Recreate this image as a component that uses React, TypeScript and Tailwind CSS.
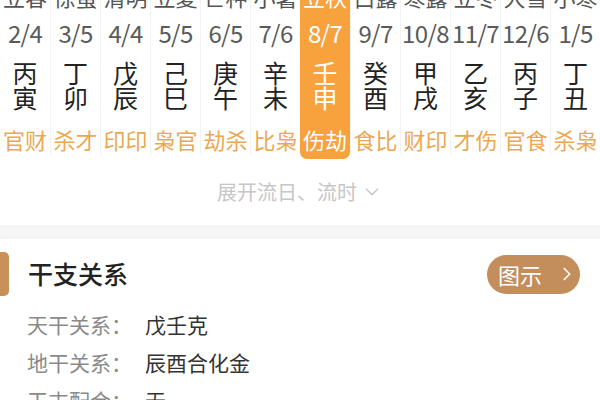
import { ChevronDown, ChevronRight } from "lucide-react";

const cols = [
  { term: "立春", date: "2/4", gan: "丙", zhi: "寅", god: "官财" },
  { term: "惊蛰", date: "3/5", gan: "丁", zhi: "卯", god: "杀才" },
  { term: "清明", date: "4/4", gan: "戊", zhi: "辰", god: "印印" },
  { term: "立夏", date: "5/5", gan: "己", zhi: "巳", god: "枭官" },
  { term: "芒种", date: "6/5", gan: "庚", zhi: "午", god: "劫杀" },
  { term: "小暑", date: "7/6", gan: "辛", zhi: "未", god: "比枭" },
  { term: "立秋", date: "8/7", gan: "壬", zhi: "申", god: "伤劫", active: true },
  { term: "白露", date: "9/7", gan: "癸", zhi: "酉", god: "食比" },
  { term: "寒露", date: "10/8", gan: "甲", zhi: "戌", god: "财印" },
  { term: "立冬", date: "11/7", gan: "乙", zhi: "亥", god: "才伤" },
  { term: "大雪", date: "12/6", gan: "丙", zhi: "子", god: "官食" },
  { term: "小寒", date: "1/5", gan: "丁", zhi: "丑", god: "杀枭" },
];

const rows = [
  { label: "天干关系：", value: "戊壬克" },
  { label: "地干关系：", value: "辰酉合化金" },
  { label: "干支配合：", value: "无" },
];

function MonthColumn({ term, date, gan, zhi, god, active }: (typeof cols)[number]) {
  return (
    <div
      className={`flex flex-col items-center rounded-b-[7px] pb-[4px] ${
        active ? "bg-[#f7a23d] text-white" : "border-l border-[#f3f3f3] first:border-l-0"
      }`}
    >
      <div className={`h-[28px] text-[22px] leading-[28px] ${active ? "text-white" : "text-[#555]"}`}>{term}</div>
      <div className={`h-[46px] text-[24px] leading-[46px] tracking-[-0.6px] ${active ? "text-white" : "text-[#5a5a5a]"}`}>
        {date}
      </div>
      <div className={`mt-[4px] flex flex-col items-center text-[25px] leading-[25px] ${active ? "text-white" : "text-[#222]"}`}>
        <span>{gan}</span>
        <span>{zhi}</span>
      </div>
      <div className={`mt-[13px] text-[22px] leading-[32px] ${active ? "text-white" : "text-[#eba852]"}`}>{god}</div>
    </div>
  );
}

export default function App() {
  return (
    <div
      className="h-[400px] w-[600px] overflow-hidden bg-white"
      style={{ fontFamily: '"Noto Sans CJK SC", "Noto Sans", sans-serif' }}
    >
      <div className="-mt-[18px] grid grid-cols-12">
        {cols.map((c) => (
          <MonthColumn key={c.term} {...c} />
        ))}
      </div>

      <div className="flex h-[66px] items-center justify-center gap-[4px] text-[20px] text-[#c6c6c6]">
        <span>展开流日、流时</span>
        <ChevronDown size={22} strokeWidth={1.6} />
      </div>

      <div className="h-[14px] bg-[#f5f5f5]" />

      <div className="pt-[13px]">
        <div className="flex items-center justify-between pr-[20px]">
          <div className="flex items-center gap-[19px]">
            <div className="h-[44px] w-[9px] rounded-r-[5px] bg-[#c8915a]" />
            <span className="text-[25px] font-medium text-[#222]">干支关系</span>
          </div>
          <button className="flex h-[39px] w-[93px] items-center gap-[8px] rounded-full bg-[#c48e5c] pl-[11px] text-[22px] text-white">
            <span>图示</span>
            <ChevronRight size={22} strokeWidth={1.8} className="ml-[6px]" />
          </button>
        </div>

        <div className="mt-[10px] flex flex-col pl-[27px]">
          {rows.map((r) => (
            <div key={r.label} className="flex h-[38px] items-center text-[21px]">
              <span className="w-[118px] text-[#8a8a8a]">{r.label}</span>
              <span className="text-[#333]">{r.value}</span>
            </div>
          ))}
        </div>
      </div>
    </div>
  );
}
